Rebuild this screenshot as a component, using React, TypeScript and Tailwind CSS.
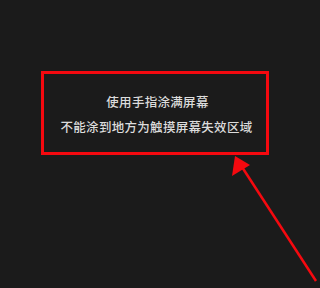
export default function App() {
  return (
    <div className="relative w-[320px] h-[288px] bg-[#1b1b1b] overflow-hidden" style={{ fontFamily: '"Noto Sans CJK SC", "Noto Sans", sans-serif' }}>
      <div className="pt-[71px] pl-[41px]">
        <div className="w-[228px] h-[84px] border-[3px] border-[#f5090f] flex flex-col items-center justify-center gap-[10px] pt-[2px] text-[12.5px] leading-[15px] tracking-[0.3px] font-medium text-[#dcdcdc]">
          <p className="pl-[5px]">使用手指涂满屏幕</p>
          <p className="pl-[3px]">不能涂到地方为触摸屏幕失效区域</p>
        </div>
      </div>
      {/* arrow */}
      <svg className="absolute left-0 top-0" width="320" height="288" viewBox="0 0 320 288">
        <line x1="316" y1="281" x2="242" y2="167" stroke="#f5090f" strokeWidth="2.5" />
        <polygon points="235,156 232,176 250,165" fill="#f5090f" />
      </svg>
    </div>
  );
}
